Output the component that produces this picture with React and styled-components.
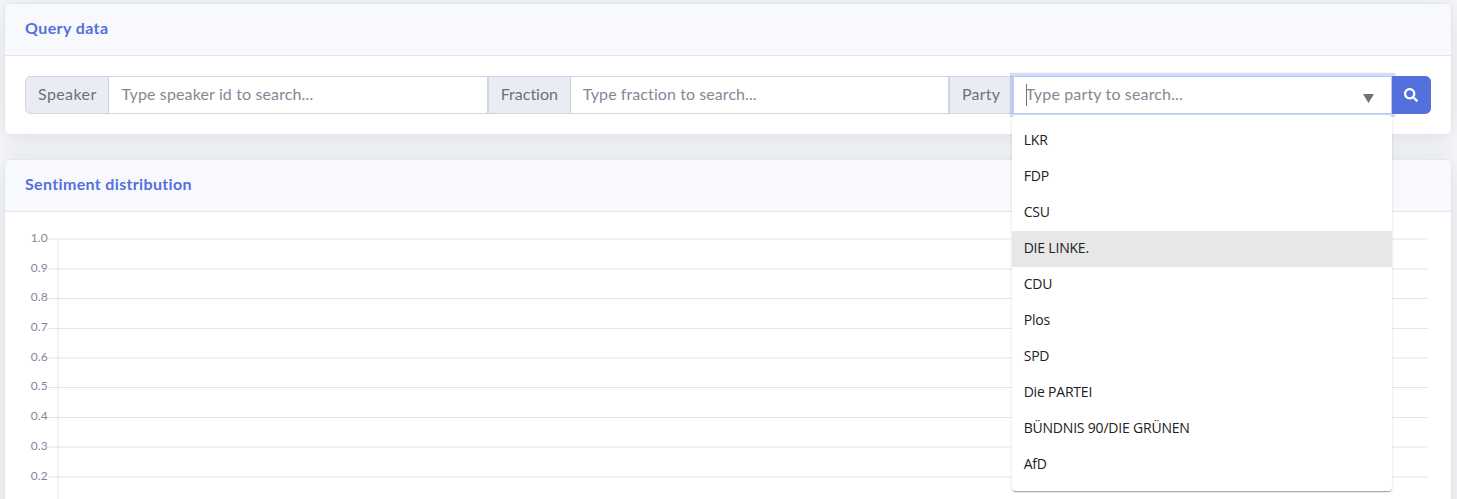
import React from "react";
import styled, { createGlobalStyle, css } from "styled-components";
import { FaSearch } from "react-icons/fa";

const GlobalStyle = createGlobalStyle`
  *, *::before, *::after { box-sizing: border-box; }
  html, body { height: 100%; overflow: hidden; }
  body {
    margin: 0;
    background: #f8f9fc;
    color: #858796;
    font-family: Lato, "Open Sans", sans-serif;
    font-size: 16px;
    line-height: 1.5;
    font-variant-ligatures: none;
  }
`;

const Page = styled.main`
  display: flex;
  flex-direction: column;
  gap: 24px;
  height: 100vh;
  padding: 3px 5px 0 4px;
  overflow: hidden;
`;

const Card = styled.section`
  flex: none;
  background: #fff;
  border: 1px solid #e3e6f0;
  border-radius: 5.6px;
  box-shadow: 0 2.4px 28px 0 rgba(58, 59, 69, 0.15);
`;

const CardHeader = styled.header`
  display: flex;
  align-items: center;
  height: 52px;
  padding: 0 20px 5px;
  background: #f8f9fc;
  border-bottom: 1px solid #e3e6f0;
  border-radius: 4.6px 4.6px 0 0;
`;

const CardTitle = styled.h6`
  margin: 0;
  color: #5370dc;
  font-size: 16px;
  font-weight: 700;
  line-height: 19px;
  letter-spacing: ${(p) => p.$tracking || "0"};
`;

const CardBody = styled.div`
  padding: 20px;
`;

const InputGroup = styled.div`
  display: flex;
  height: 38px;
`;

const Addon = styled.label`
  display: flex;
  flex: none;
  align-items: center;
  width: ${(p) => p.$width}px;
  padding: 0 0 2px 12px;
  background: #eaecf4;
  border: 1px solid #d1d3e2;
  border-radius: ${(p) => (p.$first ? "5.6px 0 0 5.6px" : "0")};
  color: #6e707e;
  letter-spacing: ${(p) => p.$tracking || "0"};
`;

const Field = styled.div`
  position: relative;
  flex: 1 1 0;
  margin-left: -1px;
  ${(p) => p.$open && css`z-index: 3;`}
`;

const Input = styled.input`
  display: block;
  width: 100%;
  height: 38px;
  padding: 0 12px 3px;
  background: #fff;
  border: 1px solid ${(p) => (p.$active ? "#bac8f3" : "#d1d3e2")};
  border-radius: 0;
  outline: 0;
  color: #6e707e;
  font: inherit;
  letter-spacing: ${(p) => p.$tracking || "0"};
  ${(p) => p.$active && css`box-shadow: 0 0 0 3.2px rgba(78, 115, 223, 0.25);`}
  &::placeholder { color: #858796; opacity: 1; }
`;

const Caret = styled.span`
  position: absolute;
  top: 8px;
  left: 13px;
  width: 1px;
  height: 22px;
  background: #6e707e;
`;

const Arrow = styled.svg`
  position: absolute;
  top: 18px;
  right: 18px;
  width: 11px;
  height: 9px;
  fill: #6e707e;
`;

const Menu = styled.ul`
  position: absolute;
  top: 39px;
  left: -1px;
  right: 0;
  margin: 0;
  padding: 8px 0;
  list-style: none;
  background: #fff;
  border-radius: 4px;
  box-shadow: 0 2px 1px -1px rgba(0, 0, 0, 0.2), 0 1px 1px 0 rgba(0, 0, 0, 0.14),
    0 1px 3px 0 rgba(0, 0, 0, 0.12);
`;

const Option = styled.li`
  height: 36px;
  padding: 0 12px;
  background: ${(p) => (p.$active ? "#e7e7e7" : "transparent")};
  color: #212121;
  font-family: "Open Sans", "Noto Sans", sans-serif;
  font-size: 14px;
  line-height: 33px;
  letter-spacing: -0.2px;
  white-space: nowrap;
`;

const SearchButton = styled.button`
  display: flex;
  flex: none;
  align-items: center;
  justify-content: center;
  width: 40px;
  height: 38px;
  margin-left: -1px;
  padding: 0;
  background: #5370dc;
  border: 1px solid #5370dc;
  border-radius: 0 5.6px 5.6px 0;
  color: #fff;
  font-size: 14px;
`;

const Plot = styled.svg`
  display: block;
  width: 100%;
  height: 320px;
  overflow: visible;
`;

const TickLabel = styled.text`
  fill: #858796;
  font-family: Lato, sans-serif;
  font-size: 12px;
  letter-spacing: 0.2px;
  text-anchor: end;
`;

const parties = ["LKR", "FDP", "CSU", "DIE LINKE.", "CDU", "Plos", "SPD", "Die PARTEI", "BÜNDNIS 90/DIE GRÜNEN", "AfD"];

// Each label with the distance of its grid line from the top of the plot.
const ticks = [
  ["1.0", 7],
  ["0.9", 37],
  ["0.8", 66.5],
  ["0.7", 96.5],
  ["0.6", 126],
  ["0.5", 155.5],
  ["0.4", 185.5],
  ["0.3", 215],
  ["0.2", 245],
];

function PartySelect() {
  return (
    <Field $open>
      <Input id="party" placeholder="Type party to search..." $active $tracking="0.15px" />
      <Caret />
      <Arrow viewBox="0 0 11 9"><path d="M0 0h11L5.5 9z" /></Arrow>
      <Menu>
        {parties.map((name) => (
          <Option key={name} $active={name === "DIE LINKE."}>{name}</Option>
        ))}
      </Menu>
    </Field>
  );
}

function SentimentPlot() {
  return (
    <Plot>
      <g stroke="#000" strokeOpacity="0.1" strokeWidth="1">
        {ticks.map(([label, y]) => (
          <line key={label} x1="23" x2="1403" y1={y} y2={y} />
        ))}
        <line x1="33" x2="33" y1="7" y2="304" />
      </g>
      {ticks.map(([label, y]) => (
        <TickLabel key={label} x="23" y={Math.floor(y) + 3}>{label}</TickLabel>
      ))}
    </Plot>
  );
}

export default function App() {
  return (
    <>
      <GlobalStyle />
      <Page>
        <Card>
          <CardHeader><CardTitle $tracking="0.4px">Query data</CardTitle></CardHeader>
          <CardBody>
            <InputGroup>
              <Addon htmlFor="speaker" $width={84.4} $first $tracking="0.4px">Speaker</Addon>
              <Field><Input id="speaker" placeholder="Type speaker id to search..." $tracking="0.13px" /></Field>
              <Addon htmlFor="fraction" $width={82.9}>Fraction</Addon>
              <Field><Input id="fraction" placeholder="Type fraction to search..." $tracking="0.08px" /></Field>
              <Addon htmlFor="party" $width={64.7} $tracking="0.25px">Party</Addon>
              <PartySelect />
              <SearchButton aria-label="Search"><FaSearch /></SearchButton>
            </InputGroup>
          </CardBody>
        </Card>
        <Card>
          <CardHeader><CardTitle $tracking="0.34px">Sentiment distribution</CardTitle></CardHeader>
          <CardBody><SentimentPlot /></CardBody>
        </Card>
      </Page>
    </>
  );
}
